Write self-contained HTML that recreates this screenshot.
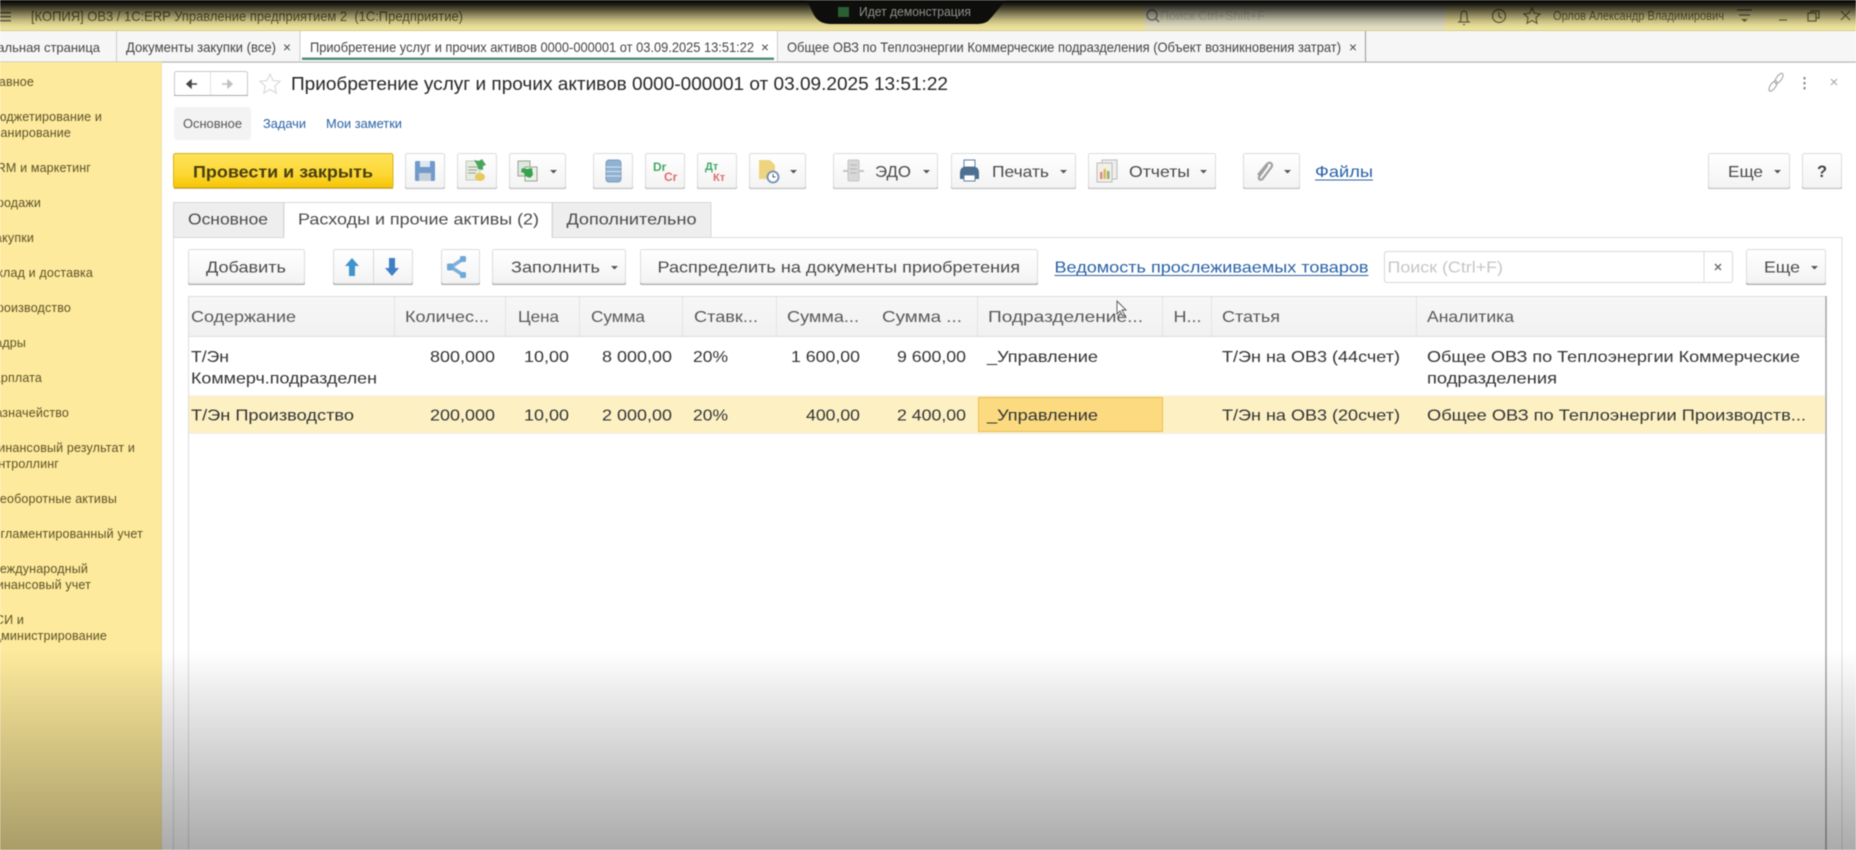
<!DOCTYPE html>
<html lang="ru"><head><meta charset="utf-8"><title>1С:ERP</title>
<style>
html,body{margin:0;padding:0;width:1856px;height:850px;overflow:hidden;background:#fff}
svg{display:block;position:absolute;left:0;top:0;filter:blur(.6px)}
text{font-family:"Liberation Sans",sans-serif;white-space:pre}
.s{font-size:12.5px;fill:#5c5228;text-anchor:end;letter-spacing:.15px}
.g{font-size:15.8px;fill:#333}
.h{font-size:15.8px;fill:#585858}
.t{font-size:13.6px;fill:#444}
.b{font-size:15.8px;fill:#4a4a4a}
.l{fill:#2a62a6}
.sh{fill:#a8a8a8}
.bt{fill:url(#bg);stroke:#dcdcdc;stroke-width:1}
.c{fill:#555}
</style></head><body>
<svg width="1856" height="850" viewBox="0 0 1856 850" xmlns="http://www.w3.org/2000/svg">
<defs>
<linearGradient id="bg" x1="0" y1="0" x2="0" y2="1"><stop offset="0" stop-color="#fff"/><stop offset="1" stop-color="#f3f3f3"/></linearGradient>
<linearGradient id="yb" x1="0" y1="0" x2="0" y2="1"><stop offset="0" stop-color="#fde25a"/><stop offset=".6" stop-color="#fdd835"/><stop offset="1" stop-color="#f5c400"/></linearGradient>
<linearGradient id="top" x1="0" y1="0" x2="0" y2="1"><stop offset="0" stop-color="#000" stop-opacity="1"/><stop offset=".17" stop-color="#000" stop-opacity=".85"/><stop offset=".35" stop-color="#000" stop-opacity=".62"/><stop offset=".52" stop-color="#000" stop-opacity=".4"/><stop offset=".69" stop-color="#000" stop-opacity=".2"/><stop offset=".86" stop-color="#000" stop-opacity=".06"/><stop offset="1" stop-color="#000" stop-opacity="0"/></linearGradient>
<linearGradient id="bot" x1="0" y1="0" x2="0" y2="1"><stop offset="0" stop-color="#000" stop-opacity="0"/><stop offset=".2" stop-color="#000" stop-opacity=".07"/><stop offset="1" stop-color="#000" stop-opacity=".33"/></linearGradient>
<linearGradient id="hd" x1="0" y1="0" x2="0" y2="1"><stop offset="0" stop-color="#f7f7f7"/><stop offset="1" stop-color="#f1f1f1"/></linearGradient>
</defs>

<!-- title bar -->
<rect x="0" y="0" width="1856" height="31" fill="#efe49c"/>
<rect x="1145" y="0" width="300" height="31" fill="#e4e0c4"/>
<g fill="#6a6444"><rect x="0" y="12" width="11" height="1.4"/><rect x="0" y="16" width="11" height="1.4"/><rect x="0" y="20" width="11" height="1.4"/></g>
<text x="31" y="21" font-size="13.6" fill="#655d34" textLength="432" lengthAdjust="spacingAndGlyphs">[КОПИЯ] ОВ3 / 1С:ERP Управление предприятием 2  (1С:Предприятие)</text>
<circle cx="1152" cy="15" r="5" fill="none" stroke="#777" stroke-width="1.4"/><path d="M1155.5 18.5l3.5 3.500" stroke="#777" stroke-width="1.5"/>
<text x="1160" y="20" font-size="12.5" fill="#c5c2ae" textLength="105" lengthAdjust="spacingAndGlyphs">Поиск Ctrl+Shift+F</text>
<g fill="none" stroke="#6f6840" stroke-width="1.2">
<path d="M1458 22h12M1460 22c1-2 1-3 1-6 0-3 1-5 3-5s3 2 3 5c0 3 0 4 1 6M1463 24.500h2"/>
<circle cx="1499" cy="16" r="6.500"/><path d="M1499 12v4.500l3 2"/>
<path d="M1532 8l2.400 5.200 5.600.7-4.100 3.800 1.100 5.600-5-2.900-5 2.900 1.100-5.600-4.100-3.800 5.600-.7z"/>
<path d="M1737 10h15M1739 15h11" /><path d="M1779 20h8"/>
<rect x="1808" y="13" width="8" height="8"/><path d="M1811 13v-2h8v7h-3"/>
<path d="M1841 11l9 9M1850 11l-9 9"/>
</g>
<path d="M1741 19h7l-3.500 3z" fill="#6f6840"/>
<text x="1553" y="20" font-size="13" fill="#6f6840" textLength="171" lengthAdjust="spacingAndGlyphs">Орлов Александр Владимирович</text>
<rect x="0" y="0" width="1856" height="29" fill="url(#top)"/>
<path d="M806 0H1006C1002 4 994 15 990 19C987 23 982 24 976 24H832C826 24 821 23 817 19C812 14 810 4 806 0Z" fill="#0e0e0c"/>
<rect x="838" y="7" width="11" height="10" fill="#2a5f33"/>
<text x="859" y="16" font-size="12.5" fill="#8f8f8a" textLength="112" lengthAdjust="spacingAndGlyphs">Идет демонстрация</text>
<rect x="0" y="30" width="1856" height="1" fill="#d6cc8a"/>

<!-- tab bar -->
<rect x="0" y="31" width="1856" height="31" fill="#f6f6f6"/>
<rect x="300" y="31" width="477" height="31" fill="#fff"/>
<rect x="0" y="61.500" width="1856" height="1.2" fill="#b4b4b4"/>
<g fill="#cdcdcd"><rect x="116" y="31" width="1" height="31"/><rect x="299.500" y="31" width="1" height="31"/><rect x="777" y="31" width="1" height="31"/><rect x="1365" y="31" width="1" height="31" fill="#9a9a9a"/></g>
<rect x="302" y="57.500" width="472" height="2.500" fill="#4f8f78"/>
<text x="100" y="52" class="t" style="font-size:13px" text-anchor="end">Начальная страница</text>
<text x="126" y="52" class="t" textLength="150" lengthAdjust="spacingAndGlyphs">Документы закупки (все)</text>
<text x="283" y="52" class="t">×</text>
<text x="310" y="52" class="t" textLength="444" lengthAdjust="spacingAndGlyphs">Приобретение услуг и прочих активов 0000-000001 от 03.09.2025 13:51:22</text>
<text x="761" y="52" class="t">×</text>
<text x="787" y="52" class="t" textLength="554" lengthAdjust="spacingAndGlyphs">Общее ОВЗ по Теплоэнергии Коммерческие подразделения (Объект возникновения затрат)</text>
<text x="1349" y="52" class="t">×</text>

<!-- sidebar -->
<rect x="0" y="62" width="161" height="788" fill="#fdea9c"/>
<rect x="161" y="62" width="1" height="788" fill="#eee3b0"/>
<g class="side">
<text class="s" x="34" y="86">Главное</text>
<text class="s" x="102" y="121">Бюджетирование и</text>
<text class="s" x="71" y="137">планирование</text>
<text class="s" x="91" y="172">CRM и маркетинг</text>
<text class="s" x="41" y="207">Продажи</text>
<text class="s" x="34" y="242">Закупки</text>
<text class="s" x="93" y="277">Склад и доставка</text>
<text class="s" x="71" y="312">Производство</text>
<text class="s" x="26" y="347">Кадры</text>
<text class="s" x="42" y="382">Зарплата</text>
<text class="s" x="69" y="417">Казначейство</text>
<text class="s" x="135" y="452">Финансовый результат и</text>
<text class="s" x="59" y="468">контроллинг</text>
<text class="s" x="117" y="503">Внеоборотные активы</text>
<text class="s" x="143" y="538">Регламентированный учет</text>
<text class="s" x="88" y="573">Международный</text>
<text class="s" x="91" y="589">финансовый учет</text>
<text class="s" x="24" y="624">НСИ и</text>
<text class="s" x="107" y="640">администрирование</text>
</g>

<!-- form header -->
<rect x="174.500" y="71.500" width="73" height="24" rx="2" fill="#fff" stroke="#c8c8c8"/>
<rect x="174" y="95" width="74" height="1" fill="#aaa"/>
<rect x="210" y="72" width="1" height="23" fill="#e2e2e2"/>
<path d="M187 84h10M191 80.500l-4 3.500 4 3.500z" stroke="#444" stroke-width="1.500" fill="#444"/>
<path d="M222 84h10M228 80.500l4 3.500-4 3.500z" stroke="#c0c0c0" stroke-width="1.500" fill="#c0c0c0"/>
<path d="M270 74l3 6.500 7 .8-5.200 4.800 1.400 7-6.200-3.600-6.200 3.600 1.400-7-5.200-4.800 7-.8z" fill="#fff" stroke="#dadada" stroke-width="1.200"/>
<text x="291" y="90" font-size="18.500" fill="#262626" textLength="657" lengthAdjust="spacingAndGlyphs">Приобретение услуг и прочих активов 0000-000001 от 03.09.2025 13:51:22</text>
<g fill="none" stroke="#a5a5a5" stroke-width="1.100"><ellipse cx="1779" cy="78.500" rx="6" ry="2.600" transform="rotate(-55 1779 78.500)"/><ellipse cx="1773" cy="86" rx="6" ry="2.600" transform="rotate(-55 1773 86)"/></g>
<g fill="#888"><rect x="1803.500" y="77" width="2" height="2.400"/><rect x="1803.500" y="82" width="2" height="2.400"/><rect x="1803.500" y="87" width="2" height="2.400"/></g>
<path d="M1831 79l6 6M1837 79l-6 6" stroke="#a5a5a5" stroke-width="1.100"/>
<rect x="174" y="107" width="77" height="33" rx="3" fill="#f3f3f3"/>
<text x="183" y="128" font-size="13" fill="#555" textLength="59" lengthAdjust="spacingAndGlyphs">Основное</text>
<text x="263" y="128" font-size="13" class="l" textLength="43" lengthAdjust="spacingAndGlyphs">Задачи</text>
<text x="326" y="128" font-size="13" class="l" textLength="76" lengthAdjust="spacingAndGlyphs">Мои заметки</text>

<!-- command bar -->
<rect x="173.500" y="153.500" width="219.500" height="34.500" rx="2" fill="url(#yb)" stroke="#d9b020"/>
<rect x="174" y="187.500" width="219" height="1.200" fill="#b8962a"/>
<text x="193" y="177.500" font-size="17" font-weight="bold" fill="#4a3f10" textLength="180" lengthAdjust="spacingAndGlyphs">Провести и закрыть</text>

<g>
<rect class="sh" x="405" y="155" width="40" height="34" rx="2"/><rect class="bt" x="405.500" y="153.500" width="39" height="34.500" rx="2"/>
<rect class="sh" x="457" y="155" width="40" height="34" rx="2"/><rect class="bt" x="457.500" y="153.500" width="39" height="34.500" rx="2"/>
<rect class="sh" x="509" y="155" width="57" height="34" rx="2"/><rect class="bt" x="509.500" y="153.500" width="56" height="34.500" rx="2"/>
<rect class="sh" x="593" y="155" width="40" height="34" rx="2"/><rect class="bt" x="593.500" y="153.500" width="39" height="34.500" rx="2"/>
<rect class="sh" x="645" y="155" width="40" height="34" rx="2"/><rect class="bt" x="645.500" y="153.500" width="39" height="34.500" rx="2"/>
<rect class="sh" x="697" y="155" width="40" height="34" rx="2"/><rect class="bt" x="697.500" y="153.500" width="39" height="34.500" rx="2"/>
<rect class="sh" x="749" y="155" width="57" height="34" rx="2"/><rect class="bt" x="749.500" y="153.500" width="56" height="34.500" rx="2"/>
<rect class="sh" x="833" y="155" width="105" height="34" rx="2"/><rect class="bt" x="833.500" y="153.500" width="104" height="34.500" rx="2"/>
<rect class="sh" x="951" y="155" width="125" height="34" rx="2"/><rect class="bt" x="951.500" y="153.500" width="124" height="34.500" rx="2"/>
<rect class="sh" x="1088" y="155" width="128" height="34" rx="2"/><rect class="bt" x="1088.500" y="153.500" width="127" height="34.500" rx="2"/>
<rect class="sh" x="1243" y="155" width="57" height="34" rx="2"/><rect class="bt" x="1243.500" y="153.500" width="56" height="34.500" rx="2"/>
<rect class="sh" x="1708" y="155" width="82" height="34" rx="2"/><rect class="bt" x="1708.500" y="153.500" width="81" height="34.500" rx="2"/>
<rect class="sh" x="1802" y="155" width="40" height="34" rx="2"/><rect class="bt" x="1802.500" y="153.500" width="39" height="34.500" rx="2"/>
</g>
<!-- save -->
<rect x="415" y="161" width="20" height="20" rx="1.500" fill="#7199c9"/><rect x="420" y="161" width="10" height="6" fill="#dfe8f2"/><rect x="419" y="173" width="12" height="8" fill="#c6d0da"/>
<!-- doc post -->
<rect x="466" y="161" width="14" height="19" fill="#e6ece0" stroke="#b9c0b2" stroke-width=".8"/><path d="M468 167h9M468 170h9M468 173h8" stroke="#9aa296"/>
<path d="M474 160l5 1 3-2 4 6-3 1v4l-5-1-1-4z" fill="#4aa55c"/><ellipse cx="480" cy="177" rx="5" ry="4" fill="#e9c95c"/>
<!-- doc arrows -->
<rect x="518" y="161" width="12" height="15" fill="#dfe8dc" stroke="#9aa296"/><rect x="525" y="167" width="12" height="14" fill="#eef0ea" stroke="#9aa296"/>
<path d="M522 168l5 1 5-1 1 7-3 3-5-2-1-3-3-1z" fill="#39a24f"/>
<path d="M550 170h7l-3.500 3.500z" class="c"/>
<!-- stack -->
<rect x="606" y="160" width="15" height="22" rx="3" fill="#8fb1d2" stroke="#7d9cba"/><path d="M606 167h15M606 171.500h15M606 176h15" stroke="#dbe6f0"/>
<text x="653" y="171" font-size="12" font-weight="bold" fill="#45a866">Dr</text><text x="664" y="181" font-size="12" font-weight="bold" fill="#e26b6b">Cr</text>
<text x="705" y="170" font-size="11" font-weight="bold" fill="#45a866">Дт</text><text x="713" y="181" font-size="11" font-weight="bold" fill="#e26b6b">Кт</text>
<!-- yellow doc clock -->
<path d="M759 160h11l5 5v14h-16z" fill="#efd47f"/><circle cx="773" cy="177" r="5.500" fill="#fff" stroke="#6f8fb5" stroke-width="1.800"/><path d="M773 174v3h2.500" stroke="#555" fill="none"/>
<path d="M790 170h7l-3.500 3.500z" class="c"/>
<!-- edo -->
<rect x="848" y="160" width="11" height="21" rx="1.500" fill="#d8d8d8" stroke="#c4c4c4"/><path d="M843 171h5M859 171h5" stroke="#c4c4c4" stroke-width="2"/><path d="M850 165h7M850 169h7M850 173h7" stroke="#b4b4b4"/>
<text x="875" y="177" class="b" textLength="36" lengthAdjust="spacingAndGlyphs">ЭДО</text>
<path d="M923 170h7l-3.500 3.500z" class="c"/>
<!-- print -->
<rect x="964" y="160" width="11" height="7" fill="#fff" stroke="#5f7f9f"/><path d="M960 173c0-4 2-6 4-6h11c2 0 4 2 4 6v6h-19z" fill="#4d7092"/><rect x="964" y="175" width="11" height="6" fill="#fff" stroke="#5f7f9f"/>
<text x="992" y="177" class="b" textLength="57" lengthAdjust="spacingAndGlyphs">Печать</text>
<path d="M1060 170h7l-3.500 3.500z" class="c"/>
<!-- reports -->
<rect x="1102" y="160" width="15" height="19" fill="#eee" stroke="#bbb"/><rect x="1097" y="163" width="15" height="19" fill="#f2efe6" stroke="#bbb"/><rect x="1100" y="172" width="2.500" height="7" fill="#d88"/><rect x="1103.500" y="169" width="2.500" height="10" fill="#dcb85a"/><rect x="1107" y="171" width="2.500" height="8" fill="#8bb07b"/>
<text x="1129" y="177" class="b" textLength="61" lengthAdjust="spacingAndGlyphs">Отчеты</text>
<path d="M1200 170h7l-3.500 3.500z" class="c"/>
<!-- clip -->
<path d="M1258 178l9-11c2.500-3 6.500 0 4.500 3l-9 12c-2 2-5 0-3-3l8-11" transform="translate(0,-3)" fill="none" stroke="#a0a0a0" stroke-width="2.200"/>
<path d="M1284 170h7l-3.500 3.500z" class="c"/>
<text x="1315" y="177" class="l" font-size="16" textLength="58" lengthAdjust="spacingAndGlyphs">Файлы</text><rect x="1315" y="179.500" width="58" height="1" fill="#2a62a6"/>
<text x="1728" y="177" class="b" textLength="35" lengthAdjust="spacingAndGlyphs">Еще</text>
<path d="M1774 170h7l-3.500 3.500z" class="c"/>
<text x="1822" y="177" text-anchor="middle" font-size="16.500" font-weight="bold" fill="#444">?</text>

<!-- tabs panel -->
<rect x="173.500" y="237.500" width="1668.500" height="620" fill="#fff" stroke="#dedede"/>
<rect x="173.500" y="202.500" width="110" height="35" fill="#eeeeee" stroke="#d8d8d8"/>
<rect x="552.500" y="202.500" width="158.500" height="35" fill="#eeeeee" stroke="#d8d8d8"/>
<rect x="284" y="202.500" width="268" height="36" fill="#fff"/>
<path d="M284 238V202.500H552V238" fill="none" stroke="#d8d8d8"/>
<text x="188" y="224.500" class="b" textLength="80" lengthAdjust="spacingAndGlyphs">Основное</text>
<text x="298" y="224.500" class="b" textLength="241" lengthAdjust="spacingAndGlyphs">Расходы и прочие активы (2)</text>
<text x="566.500" y="224.500" class="b" textLength="130" lengthAdjust="spacingAndGlyphs">Дополнительно</text>

<!-- table toolbar -->
<g>
<rect class="sh" x="188" y="251" width="117" height="34" rx="2"/><rect class="bt" x="188.500" y="249.500" width="116" height="34" rx="2"/>
<rect class="sh" x="333" y="251" width="80" height="34" rx="2"/><rect class="bt" x="333.500" y="249.500" width="79" height="34" rx="2"/>
<rect x="373" y="250" width="1" height="33" fill="#d8d8d8"/>
<rect class="sh" x="441" y="251" width="39" height="34" rx="2"/><rect class="bt" x="441.500" y="249.500" width="38" height="34" rx="2"/>
<rect class="sh" x="492" y="251" width="134" height="34" rx="2"/><rect class="bt" x="492.500" y="249.500" width="133" height="34" rx="2"/>
<rect class="sh" x="640" y="251" width="398" height="34" rx="2"/><rect class="bt" x="640.500" y="249.500" width="397" height="34" rx="2"/>
<rect class="sh" x="1746" y="251" width="80" height="34" rx="2"/><rect class="bt" x="1746.500" y="249.500" width="79" height="34" rx="2"/>
</g>
<text x="206" y="272.500" class="b" textLength="80" lengthAdjust="spacingAndGlyphs">Добавить</text>
<path d="M352 258l7 8h-4v10h-6v-10h-4z" fill="#3f93cf"/>
<path d="M392 276l7-8h-4v-10h-6v10h-4z" fill="#3f7fc4"/>
<path d="M463 259l-12 8 12 8" fill="none" stroke="#7db0da" stroke-width="3.500" stroke-linejoin="round"/>
<g fill="#6ea8d8"><rect x="447" y="263.500" width="6" height="7" rx="1.500"/><rect x="460" y="256" width="6" height="6" rx="1.500"/><rect x="460" y="272" width="6" height="6" rx="1.500"/></g>
<text x="511" y="272.500" class="b" textLength="89" lengthAdjust="spacingAndGlyphs">Заполнить</text>
<path d="M611 266h7l-3.500 3.500z" class="c"/>
<text x="657.500" y="272.500" class="b" textLength="362.500" lengthAdjust="spacingAndGlyphs">Распределить на документы приобретения</text>
<text x="1054.500" y="272.500" font-size="15.800" class="l" textLength="314" lengthAdjust="spacingAndGlyphs">Ведомость прослеживаемых товаров</text><rect x="1054.500" y="275" width="314" height="1" fill="#2a62a6"/>
<rect x="1384.500" y="251.500" width="348" height="31" rx="2" fill="#fff" stroke="#d8d8d8"/><rect x="1703.500" y="252" width="1" height="30" fill="#dcdcdc"/>
<text x="1387.500" y="272.500" font-size="15.800" fill="#c6c6c6" textLength="115.500" lengthAdjust="spacingAndGlyphs">Поиск (Ctrl+F)</text>
<path d="M1715 264l6 6M1721 264l-6 6" stroke="#666" stroke-width="1.300"/>
<text x="1764" y="272.500" class="b" textLength="36" lengthAdjust="spacingAndGlyphs">Еще</text>
<path d="M1811 266h7l-3.500 3.500z" class="c"/>

<!-- grid -->
<rect x="188.500" y="296.500" width="1637" height="560" fill="#fff" stroke="#dcdcdc"/>
<rect x="1825.500" y="296" width="1.200" height="554" fill="#9d9d9d"/>
<rect x="189" y="297" width="1636" height="39" fill="url(#hd)"/>
<rect x="189" y="336" width="1636" height="1" fill="#dedede"/>
<g fill="#e4e4e4">
<rect x="394" y="297" width="1" height="39"/><rect x="505" y="297" width="1" height="39"/><rect x="579" y="297" width="1" height="39"/><rect x="682" y="297" width="1" height="39"/><rect x="776" y="297" width="1" height="39"/><rect x="977" y="297" width="1" height="39"/><rect x="1162" y="297" width="1" height="39"/><rect x="1211" y="297" width="1" height="39"/><rect x="1416" y="297" width="1" height="39"/>
</g>
<rect x="189" y="395.500" width="1636" height="1" fill="#eeeeee"/>
<rect x="189" y="396" width="1636" height="37" fill="#fdf1c4"/>
<rect x="189" y="433" width="1636" height="1" fill="#ededed"/>
<rect x="978.500" y="397.500" width="184" height="34" fill="#fbda80" stroke="#ecbd52"/>

<text x="191" y="322" class="h" textLength="105" lengthAdjust="spacingAndGlyphs">Содержание</text>
<text x="405" y="322" class="h" textLength="84" lengthAdjust="spacingAndGlyphs">Количес...</text>
<text x="518" y="322" class="h" textLength="41" lengthAdjust="spacingAndGlyphs">Цена</text>
<text x="591" y="322" class="h" textLength="54" lengthAdjust="spacingAndGlyphs">Сумма</text>
<text x="694" y="322" class="h" textLength="64" lengthAdjust="spacingAndGlyphs">Ставк...</text>
<text x="787" y="322" class="h" textLength="72" lengthAdjust="spacingAndGlyphs">Сумма...</text>
<text x="882" y="322" class="h" textLength="80" lengthAdjust="spacingAndGlyphs">Сумма ...</text>
<text x="988" y="322" class="h" textLength="155" lengthAdjust="spacingAndGlyphs">Подразделение...</text>
<text x="1173.500" y="322" class="h" textLength="28" lengthAdjust="spacingAndGlyphs">Н...</text>
<text x="1222" y="322" class="h" textLength="58" lengthAdjust="spacingAndGlyphs">Статья</text>
<text x="1427" y="322" class="h" textLength="87" lengthAdjust="spacingAndGlyphs">Аналитика</text>

<text x="191" y="362" class="g" textLength="38" lengthAdjust="spacingAndGlyphs">Т/Эн</text>
<text x="191" y="383.500" class="g" textLength="186" lengthAdjust="spacingAndGlyphs">Коммерч.подразделен</text>
<text x="430" y="362" class="g" textLength="65" lengthAdjust="spacingAndGlyphs">800,000</text>
<text x="524" y="362" class="g" textLength="45" lengthAdjust="spacingAndGlyphs">10,00</text>
<text x="602" y="362" class="g" textLength="70" lengthAdjust="spacingAndGlyphs">8 000,00</text>
<text x="693" y="362" class="g" textLength="35" lengthAdjust="spacingAndGlyphs">20%</text>
<text x="791" y="362" class="g" textLength="69" lengthAdjust="spacingAndGlyphs">1 600,00</text>
<text x="897" y="362" class="g" textLength="69" lengthAdjust="spacingAndGlyphs">9 600,00</text>
<text x="987" y="362" class="g" textLength="111" lengthAdjust="spacingAndGlyphs">_Управление</text>
<text x="1222" y="362" class="g" textLength="178" lengthAdjust="spacingAndGlyphs">Т/Эн на ОВ3 (44счет)</text>
<text x="1427" y="362" class="g" textLength="373" lengthAdjust="spacingAndGlyphs">Общее ОВЗ по Теплоэнергии Коммерческие</text>
<text x="1427" y="383.500" class="g" textLength="130" lengthAdjust="spacingAndGlyphs">подразделения</text>

<text x="191" y="420.500" class="g" textLength="163" lengthAdjust="spacingAndGlyphs">Т/Эн Производство</text>
<text x="430" y="420.500" class="g" textLength="65" lengthAdjust="spacingAndGlyphs">200,000</text>
<text x="524" y="420.500" class="g" textLength="45" lengthAdjust="spacingAndGlyphs">10,00</text>
<text x="602" y="420.500" class="g" textLength="70" lengthAdjust="spacingAndGlyphs">2 000,00</text>
<text x="693" y="420.500" class="g" textLength="35" lengthAdjust="spacingAndGlyphs">20%</text>
<text x="806" y="420.500" class="g" textLength="54" lengthAdjust="spacingAndGlyphs">400,00</text>
<text x="897" y="420.500" class="g" textLength="69" lengthAdjust="spacingAndGlyphs">2 400,00</text>
<text x="987" y="420.500" class="g" textLength="111" lengthAdjust="spacingAndGlyphs">_Управление</text>
<text x="1222" y="420.500" class="g" textLength="178" lengthAdjust="spacingAndGlyphs">Т/Эн на ОВ3 (20счет)</text>
<text x="1427" y="420.500" class="g" textLength="379" lengthAdjust="spacingAndGlyphs">Общее ОВЗ по Теплоэнергии Производств...</text>

<!-- mouse cursor -->
<path d="M1117 301v13l3-3 2.500 5 2-1-2.500-5h4z" fill="#fff" stroke="#555" stroke-width=".9"/>

<!-- bottom fade -->
<rect x="0" y="650" width="1856" height="200" fill="url(#bot)"/>
</svg>
</body></html>
